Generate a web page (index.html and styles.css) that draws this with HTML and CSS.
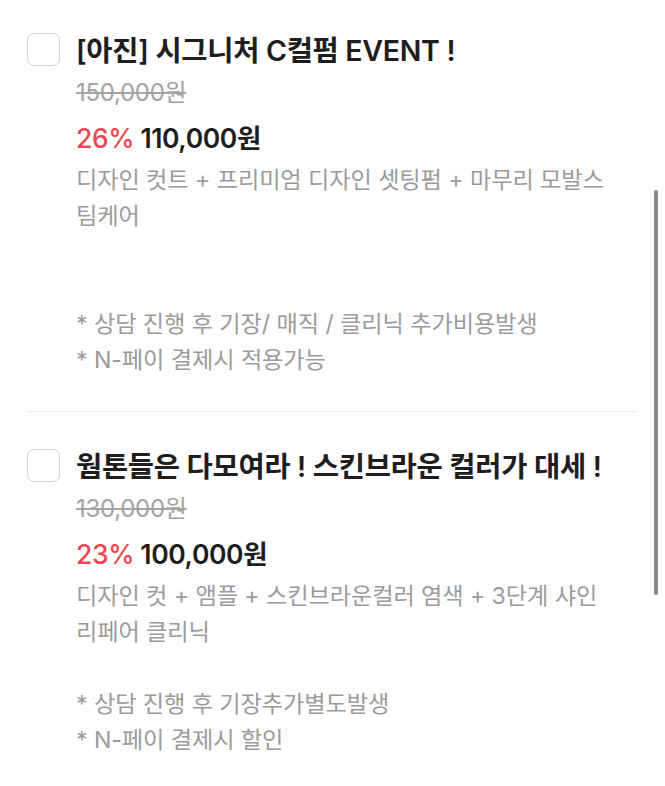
FILE: index.html
```html
<!DOCTYPE html>
<html lang="ko">
<head>
<meta charset="utf-8">
<link rel="stylesheet" href="styles.css">
</head>
<body>
<div class="list">
  <div class="item first">
    <div class="check"></div>
    <div class="body">
      <div class="title">[아진] 시그니처 C컬펌 EVENT !</div>
      <div class="orig">150,000원</div>
      <div class="price"><span class="rate">26%</span> 110,000원</div>
      <div class="desc">디자인 컷트 + 프리미엄 디자인 셋팅펌 + 마무리 모발스팀케어


* 상담 진행 후 기장/ 매직 / 클리닉 추가비용발생
* N-페이 결제시 적용가능</div>
    </div>
  </div>
  <div class="item">
    <div class="check"></div>
    <div class="body">
      <div class="title">웜톤들은 다모여라 ! 스킨브라운 컬러가 대세 !</div>
      <div class="orig">130,000원</div>
      <div class="price"><span class="rate">23%</span> 100,000원</div>
      <div class="desc">디자인 컷 + 앰플 + 스킨브라운컬러 염색 + 3단계 샤인 리페어 클리닉

* 상담 진행 후 기장추가별도발생
* N-페이 결제시 할인</div>
    </div>
  </div>
</div>
<div class="scrollbar"></div>
</body>
</html>
```
FILE: styles.css
```css
html, body {
  margin: 0;
  padding: 0;
  background: #ffffff;
}
body {
  width: 665px;
  height: 786px;
  overflow: hidden;
  position: relative;
  font-family: "Inter", "Noto Sans CJK KR", sans-serif;
}
.list {
  padding: 0 28px 0 27px;
}
.item {
  display: flex;
  gap: 16px;
  padding: 36px 0 33px;
  border-bottom: 1px solid #ececec;
}
.item.first {
  padding-top: 32px;
}
.check {
  flex: none;
  width: 31px;
  height: 31px;
  border: 1.5px solid #cfcfcf;
  border-radius: 7px;
  box-sizing: content-box;
  margin-top: 1px;
}
.body {
  flex: 1;
  padding-right: 24px;
}
.title {
  font-size: 28.5px;
  line-height: 38px;
  font-weight: 600;
  color: #1e1e1e;
  letter-spacing: -0.3px;
}
.orig {
  margin-top: 6px;
  font-size: 24px;
  line-height: 34px;
  color: #a3a3a3;
  text-decoration: line-through;
  text-decoration-color: #a3a3a3;
  letter-spacing: -0.3px;
}
.price {
  margin-top: 10px;
  font-size: 26.5px;
  line-height: 36px;
  font-weight: 600;
  color: #1e1e1e;
  letter-spacing: -0.4px;
}
.rate {
  color: #ec4650;
  font-weight: 500;
}
.desc {
  margin-top: 6px;
  font-size: 23.2px;
  line-height: 36px;
  color: #9b9b9b;
  white-space: pre-line;
  letter-spacing: -0.1px;
}
.scrollbar {
  position: absolute;
  left: 654px;
  top: 190px;
  width: 4px;
  height: 405px;
  border-radius: 2px;
  background: #8a8a8a;
}
```
